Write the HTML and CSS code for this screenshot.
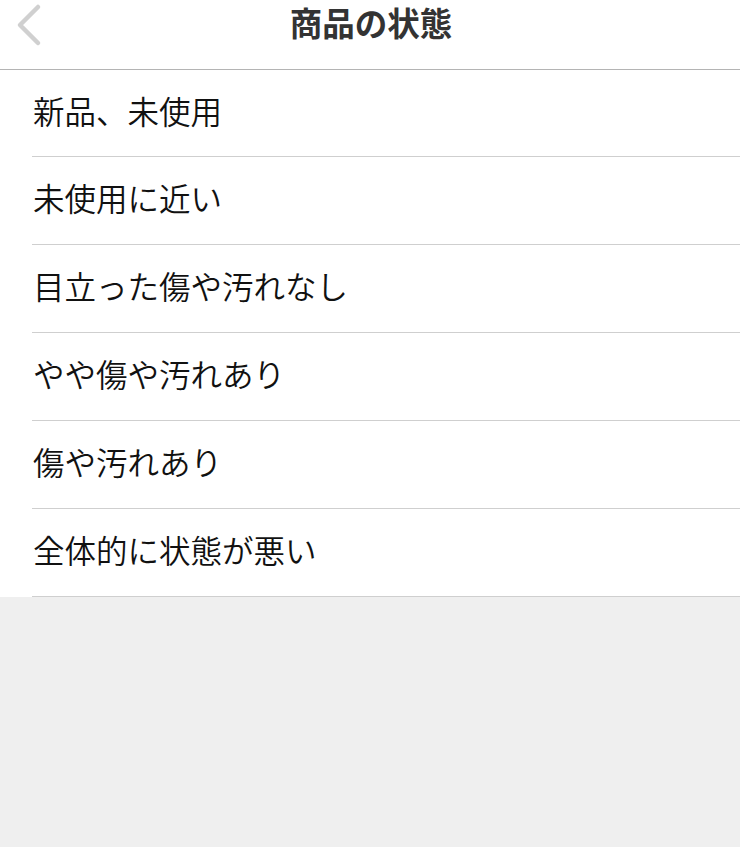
FILE: index.html
```
<!DOCTYPE html>
<html lang="ja">
<head>
<meta charset="utf-8">
<title>商品の状態</title>
<link rel="stylesheet" href="styles.css">
</head>
<body>
<div class="header">
  <a class="back" href="#">
    <svg width="30" height="50" viewBox="0 0 30 50">
      <polyline points="24,7 6,25 24,43" fill="none" stroke="#d0d0d0" stroke-width="4.5" stroke-linecap="round" stroke-linejoin="round"/>
    </svg>
  </a>
  <h1 class="title">商品の状態</h1>
</div>
<ul class="conditions">
  <li class="condition">新品、未使用</li>
  <li class="condition">未使用に近い</li>
  <li class="condition">目立った傷や汚れなし</li>
  <li class="condition">やや傷や汚れあり</li>
  <li class="condition">傷や汚れあり</li>
  <li class="condition">全体的に状態が悪い</li>
</ul>
</body>
</html>
```
FILE: styles.css
```
html, body { margin: 0; padding: 0; background: #efefef; }
body { font-family: "Noto Sans CJK JP", "Noto Sans", sans-serif; color: #111; }

.header { position: relative; height: 69px; background: #fff; border-bottom: 1px solid #b4b4b4;
  display: flex; justify-content: center; }
.back { position: absolute; left: 14px; top: 0; display: block; }
.back svg { display: block; }
.title { margin: 1px 0 0 2px; font-size: 32.5px; font-weight: bold; color: #333; line-height: 1.3; }

.conditions { list-style: none; margin: 0; padding: 0 0 0 32px; background: #fff; }
.condition { height: 88px; box-sizing: border-box; border-bottom: 1px solid #cfcfcf;
  font-size: 31.5px; font-weight: 350; line-height: 1.3; display: flex; align-items: center;
  padding-left: 1px; padding-bottom: 6px; }
.condition:first-child { height: 87px; padding-bottom: 5px; }
```
